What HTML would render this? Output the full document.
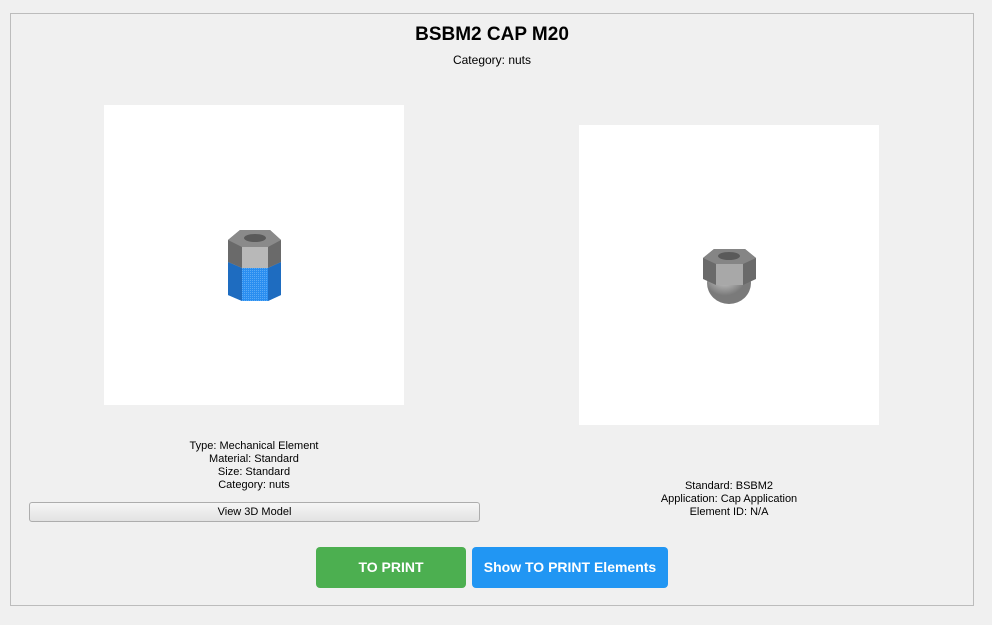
<!DOCTYPE html>
<html><head><style>
body{margin:0;background:#f0f0f0;font-family:"Liberation Sans",Arial,sans-serif;width:992px;height:625px;position:relative;overflow:hidden}
.box{position:absolute;left:10px;top:13px;width:962px;height:591px;border:1px solid #bcbcbc}
.a{position:absolute;text-align:center}
.info{font-size:11px;line-height:13px;color:#000}
.img{position:absolute;background:#fff;width:300px;height:300px}
.btn{position:absolute;border-radius:4px;color:#fff;font-weight:bold;font-size:14px;text-align:center;line-height:41px}
</style></head><body>
<div class="box"></div>
<div class="a" style="left:-4px;width:992px;top:24px;font-size:19px;font-weight:bold">BSBM2 CAP M20</div>
<div class="a" style="left:-4px;width:992px;top:53px;font-size:12px">Category: nuts</div>
<div class="img" style="left:104px;top:105px">
<svg width="300" height="300" viewBox="104 105 300 300">
<defs><pattern id="d" width="2" height="2" patternUnits="userSpaceOnUse"><rect width="2" height="2" fill="#2a8ef0"/><rect width="1" height="1" fill="#5aaaf5"/></pattern></defs>
<polygon points="228,262 242,268 268,268 281,262 281,295 268,301 242,301 228,295" fill="url(#d)"/>
<polygon points="228,262 242,268 242,301 228,295" fill="#1e6cc0"/>
<polygon points="268,268 281,262 281,295 268,301" fill="#1e6cc0"/>
<polygon points="228,240 240,230 270,230 281,240 281,262 268,268 242,268 228,262" fill="#6a6a6a"/>
<polygon points="242,247 268,247 268,268 242,268" fill="#b8b8b8"/>
<polygon points="228,240 240,230 270,230 281,240 268,247 242,247" fill="#8a8a8a"/>
<ellipse cx="255" cy="238" rx="11" ry="4" fill="#5a5a5a"/>
</svg></div>
<div class="img" style="left:579px;top:125px">
<svg width="300" height="300" viewBox="579 125 300 300">
<defs><radialGradient id="g" cx="0.4" cy="0.3"><stop offset="0" stop-color="#e0e0e0"/><stop offset="1" stop-color="#7a7a7a"/></radialGradient></defs>
<ellipse cx="729" cy="283" rx="22" ry="21" fill="url(#g)"/>
<polygon points="703,258 714,249 745,249 756,258 756,279 743,285 716,285 703,279" fill="#6a6a6a"/>
<polygon points="716,264 743,264 743,285 716,285" fill="#a8a8a8"/>
<polygon points="703,258 714,249 745,249 756,258 743,264 716,264" fill="#858585"/>
<ellipse cx="729" cy="256" rx="11" ry="4" fill="#5a5a5a"/>
</svg></div>
<div class="a info" style="left:104px;width:300px;top:440px">Type: Mechanical Element<br>Material: Standard<br>Size: Standard<br>Category: nuts</div>
<div class="a" style="left:29px;top:502px;width:449px;height:18px;border:1px solid #adadad;border-radius:3px;background:linear-gradient(#f6f6f6,#e2e2e2);font-size:11px;line-height:19px">View 3D Model</div>
<div class="a info" style="left:579px;width:300px;top:480px">Standard: BSBM2<br>Application: Cap Application<br>Element ID: N/A</div>
<div class="btn" style="left:316px;top:547px;width:150px;background:#4caf50">TO PRINT</div>
<div class="btn" style="left:472px;top:547px;width:196px;background:#2196f3">Show TO PRINT Elements</div>
</body></html>
